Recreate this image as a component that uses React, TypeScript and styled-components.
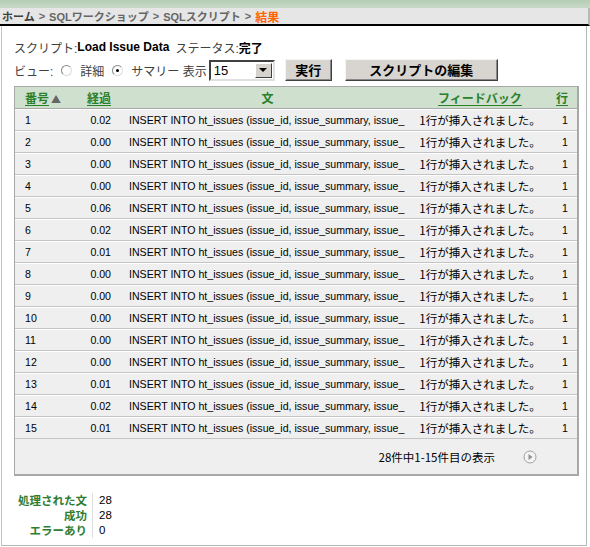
import React from 'react';
import styled, { createGlobalStyle } from 'styled-components';

const GlobalStyle = createGlobalStyle`
  html, body {
    margin: 0;
    padding: 0;
    background: #ffffff;
  }
  body {
    font-family: "Liberation Sans", "Noto Sans CJK JP", sans-serif;
    font-size: 12px;
    color: #000;
  }
`;

const Page = styled.div`
  width: 590px;
  height: 547px;
  box-sizing: border-box;
  display: flex;
  flex-direction: column;
`;

const TopBand = styled.div`
  height: 8px;
  background: linear-gradient(#b4ccb4, #c8d9c8);
`;

const Breadcrumb = styled.div`
  height: 16px;
  background: #e6e6e6;
  border-bottom: 2px solid #000;
  border-right: 2px solid #b8b8b8;
  display: flex;
  align-items: center;
  padding-left: 2px;
  font-weight: bold;
  font-size: 11px;
  color: #606060;
  gap: 4px;
  white-space: nowrap;
`;

const Crumb = styled.span<{ $tone?: 'home' | 'current' }>`
  color: ${p => (p.$tone === 'home' ? '#404040' : p.$tone === 'current' ? '#ff6600' : '#666666')};
  font-size: ${p => (p.$tone === 'current' ? '12px' : 'inherit')};
`;

const Frame = styled.div`
  flex: 1;
  margin-left: 1px;
  width: 586px;
  box-sizing: border-box;
  border-left: 1px solid #c4c4c4;
  border-right: 1px solid #b8b8b8;
  border-bottom: 1px solid #b8b8b8;
  margin-bottom: 1px;
  padding: 12px 0 0 12px;
`;

const InfoLine = styled.div`
  height: 18px;
  display: flex;
  align-items: center;
  color: #404040;
  white-space: nowrap;
`;

const Value = styled.span`
  font-weight: bold;
  color: #000;
  margin-right: 6px;
`;

const Controls = styled.div`
  margin-top: 3px;
  height: 22px;
  display: flex;
  align-items: center;
  color: #404040;
  white-space: nowrap;
`;

const Radio = styled.span<{ $checked?: boolean }>`
  width: 9px;
  height: 9px;
  border-radius: 50%;
  border: 1px solid #888;
  border-right-color: #ddd;
  border-bottom-color: #ddd;
  background: #fff;
  margin: 0 8px 0 8px;
  position: relative;
  &::after {
    content: '';
    display: ${p => (p.$checked ? 'block' : 'none')};
    position: absolute;
    left: 3px;
    top: 3px;
    width: 3px;
    height: 3px;
    border-radius: 50%;
    background: #000;
  }
`;

const Select = styled.div`
  margin-left: 2px;
  width: 66px;
  height: 21px;
  box-sizing: border-box;
  border: 2px solid;
  border-color: #404040 #e0e0e0 #e0e0e0 #404040;
  background: #fff;
  display: flex;
  align-items: stretch;
  font-size: 13px;
  color: #000;
`;

const SelectText = styled.span`
  flex: 1;
  padding-left: 3px;
  display: flex;
  align-items: center;
`;

const SelectArrow = styled.span`
  width: 15px;
  margin: 1px;
  background: #d6d3ce;
  border: 1px solid;
  border-color: #fff #404040 #404040 #fff;
  display: flex;
  align-items: center;
  justify-content: center;
  &::after {
    content: '';
    border-left: 4px solid transparent;
    border-right: 4px solid transparent;
    border-top: 4px solid #000;
  }
`;

const Button = styled.button<{ $w: number; $ml: number }>`
  width: ${p => p.$w}px;
  margin-left: ${p => p.$ml}px;
  height: 22px;
  box-sizing: border-box;
  background: #d8d5d0;
  border: 1px solid;
  border-color: #f4f4f4 #404040 #404040 #f4f4f4;
  box-shadow: inset -1px -1px 0 #888;
  font-family: "Noto Sans CJK JP", sans-serif;
  font-weight: bold;
  font-size: 13px;
  color: #000;
  padding: 0;
  line-height: 18px;
`;

const Report = styled.div`
  margin-top: 5px;
  width: 565px;
  box-sizing: border-box;
  border: 1px solid #a8a8a8;
  border-right-width: 2px;
  border-bottom-width: 2px;
  background: #efefef;
`;

const Table = styled.table`
  width: 100%;
  border-collapse: separate;
  border-spacing: 0;
  table-layout: fixed;
`;

const Th = styled.th<{ $align: 'left' | 'center' | 'right'; $w: number; $pad?: string }>`
  box-sizing: border-box;
  width: ${p => p.$w}px;
  height: 22px;
  background: #cfe0cf;
  text-align: ${p => p.$align};
  padding: ${p => p.$pad || '0'};
  font-family: "Noto Sans CJK JP", sans-serif;
  font-size: 12px;
  font-weight: bold;
  color: #2a7f2a;
  border-bottom: 1px solid #a8a8a8;
  white-space: nowrap;
`;

const HeadLink = styled.span`
  text-decoration: underline;
  text-underline-offset: 2px;
`;

const SortMark = styled.span`
  color: #666;
  font-size: 10px;
  margin-left: 2px;
`;

const Td = styled.td<{ $align: 'left' | 'center' | 'right'; $pad?: string }>`
  box-sizing: border-box;
  height: 22px;
  text-align: ${p => p.$align};
  padding: ${p => p.$pad || '0'};
  font-size: 10.6px;
  color: #000;
  border-bottom: 1px solid #c4c4c4;
  border-top: 1px solid #fff;
  white-space: nowrap;
  overflow: hidden;
`;

const Feedback = styled(Td)`
  font-family: "Noto Sans CJK JP", sans-serif;
  font-size: 11.5px;
`;

const Pager = styled.div`
  height: 35px;
  display: flex;
  align-items: center;
  justify-content: flex-end;
  padding-right: 40px;
  gap: 28px;
  font-family: "Noto Sans CJK JP", sans-serif;
  font-size: 11.5px;
`;

const Summary = styled.div`
  margin-top: 17px;
  display: grid;
  grid-template-columns: 78px auto;
  width: max-content;
`;

const SumLabel = styled.div`
  height: 15px;
  line-height: 15px;
  text-align: right;
  padding-right: 5px;
  font-family: "Noto Sans CJK JP", sans-serif;
  font-weight: bold;
  color: #2f7d32;
  font-size: 11.5px;
  white-space: nowrap;
`;

const SumValue = styled.div`
  height: 15px;
  line-height: 15px;
  border-left: 1px solid #e0e0e0;
  padding-left: 6px;
  font-size: 11.5px;
`;

const NextIcon = () => (
  <svg width="14" height="14" viewBox="0 0 14 14">
    <circle cx="7" cy="7" r="6" fill="#f4f4f4" stroke="#a0a0a0" strokeWidth="1" />
    <path d="M5.5 4 L9.5 7 L5.5 10 Z" fill="#909090" />
  </svg>
);

const elapsed = ['0.02', '0.00', '0.00', '0.00', '0.06', '0.02', '0.01', '0.00', '0.00', '0.00', '0.00', '0.00', '0.01', '0.02', '0.01'];

const App: React.FC = () => (
  <Page>
    <GlobalStyle />
    <TopBand />
    <Breadcrumb>
      <Crumb $tone="home">ホーム</Crumb>
      <Crumb>&gt;</Crumb>
      <Crumb>SQLワークショップ</Crumb>
      <Crumb>&gt;</Crumb>
      <Crumb>SQLスクリプト</Crumb>
      <Crumb>&gt;</Crumb>
      <Crumb $tone="current">結果</Crumb>
    </Breadcrumb>
    <Frame>
      <InfoLine>
        スクリプト:<Value>Load Issue Data</Value>
        ステータス:<Value>完了</Value>
      </InfoLine>
      <Controls>
        ビュー:
        <Radio />
        詳細
        <Radio $checked />
        サマリー&nbsp;表示
        <Select>
          <SelectText>15</SelectText>
          <SelectArrow />
        </Select>
        <Button $w={47} $ml={10}>実行</Button>
        <Button $w={153} $ml={13}>スクリプトの編集</Button>
      </Controls>
      <Report>
        <Table>
          <thead>
            <tr>
              <Th $align="left" $w={62} $pad="0 0 0 10px">
                <HeadLink>番号</HeadLink>
                <SortMark>▲</SortMark>
              </Th>
              <Th $align="right" $w={43} $pad="0 9px 0 0">
                <HeadLink>経過</HeadLink>
              </Th>
              <Th $align="center" $w={295}>文</Th>
              <Th $align="center" $w={130}>
                <HeadLink>フィードバック</HeadLink>
              </Th>
              <Th $align="right" $w={32} $pad="0 9px 0 0">
                <HeadLink>行</HeadLink>
              </Th>
            </tr>
          </thead>
          <tbody>
            {elapsed.map((e, i) => (
              <tr key={i}>
                <Td $align="left" $pad="0 0 0 10px">{i + 1}</Td>
                <Td $align="right" $pad="0 9px 0 0">{e}</Td>
                <Td $align="left" $pad="0 0 0 9px">INSERT INTO ht_issues (issue_id, issue_summary, issue_</Td>
                <Feedback $align="center">1行が挿入されました。</Feedback>
                <Td $align="right" $pad="0 9px 0 0">1</Td>
              </tr>
            ))}
          </tbody>
        </Table>
        <Pager>
          28件中1-15件目の表示
          <NextIcon />
        </Pager>
      </Report>
      <Summary>
        <SumLabel>処理された文</SumLabel>
        <SumValue>28</SumValue>
        <SumLabel>成功</SumLabel>
        <SumValue>28</SumValue>
        <SumLabel>エラーあり</SumLabel>
        <SumValue>0</SumValue>
      </Summary>
    </Frame>
  </Page>
);

export default App;
